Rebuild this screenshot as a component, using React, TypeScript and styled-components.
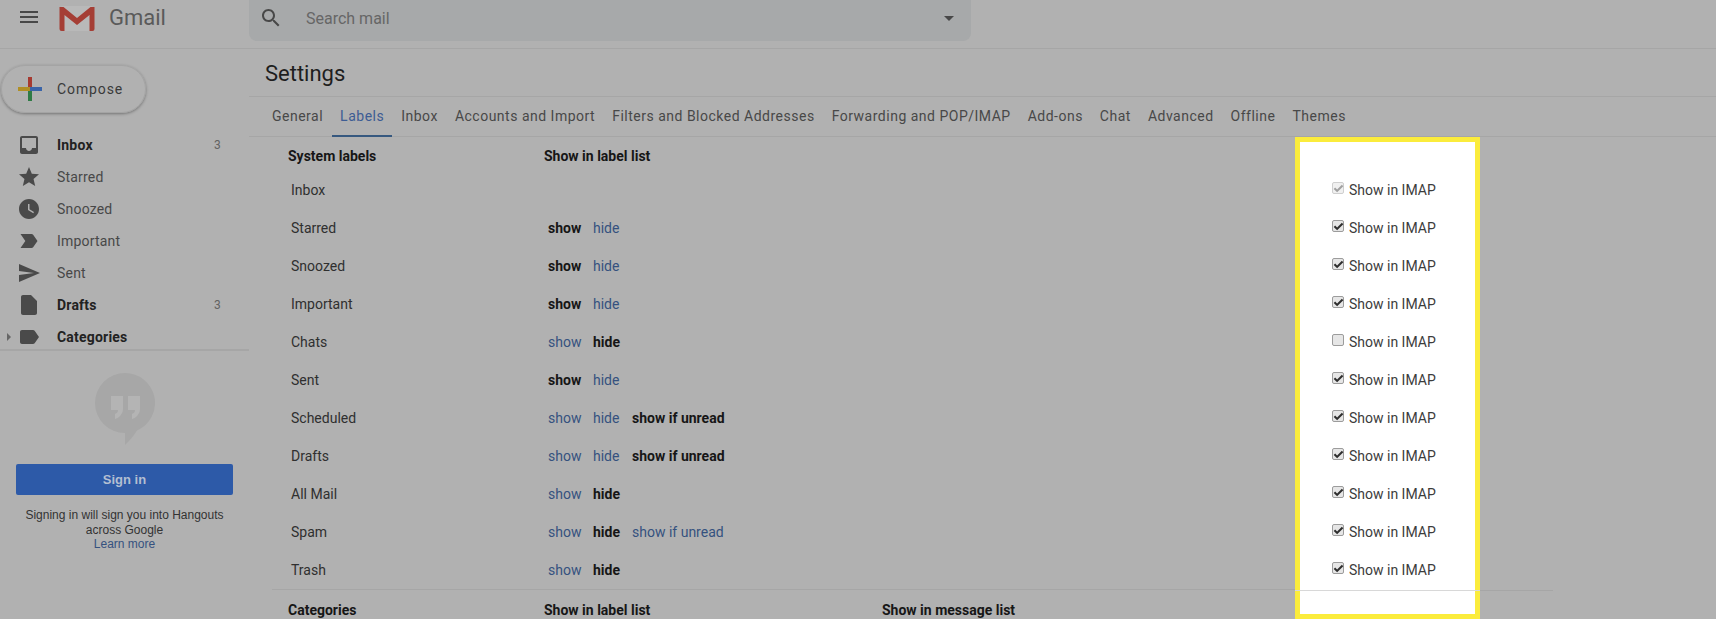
import React, { FC } from 'react';
import styled, { createGlobalStyle } from 'styled-components';

const colors = {
  page: '#b1b1b1',
  line: '#a6a6a6',
  search: '#a7a9aa',
  text: '#2f2f2f',
  strong: '#161616',
  soft: '#484848',
  icon: '#4a4a4a',
  link: '#35517f',
  blue: '#2d5aa8',
  yellow: '#fbec3c',
};

const GlobalStyle = createGlobalStyle`
  html, body {
    margin: 0;
    padding: 0;
    overflow: hidden;
    background: ${colors.page};
  }
  body {
    font-family: Roboto, "Liberation Sans", sans-serif;
    font-size: 14px;
    color: ${colors.text};
  }
`;

const Page = styled.div`
  width: 1716px;
  height: 619px;
  overflow: hidden;
  display: flex;
  flex-direction: column;
`;

const TopBar = styled.header`
  flex: 0 0 49px;
  box-sizing: border-box;
  display: flex;
  border-bottom: 1px solid ${colors.line};
`;

const Brand = styled.div`
  flex: 0 0 249px;
  box-sizing: border-box;
  padding: 4px 0 0 17px;
  display: flex;
  align-items: flex-start;
`;

const MenuIcon = styled.svg`
  width: 24px;
  height: 24px;
  margin-top: 1px;
  fill: ${colors.soft};
`;

const Logo = styled.svg`
  width: 38px;
  height: 27px;
  margin-left: 17px;
`;

const BrandName = styled.span`
  margin-left: 13px;
  font-size: 22px;
  line-height: 27px;
  color: #5a5a5a;
`;

const SearchBox = styled.div`
  flex: 0 0 722px;
  height: 41px;
  box-sizing: border-box;
  padding: 0 17px 5px 10px;
  display: flex;
  align-items: center;
  background: ${colors.search};
  border-radius: 0 0 8px 8px;
`;

const SearchIcon = styled.svg`
  width: 24px;
  height: 24px;
  fill: ${colors.soft};
`;

const SearchText = styled.span`
  margin-left: 23px;
  font-size: 16px;
  color: #666;
  flex: 1;
`;

const Caret = styled.span`
  width: 0;
  height: 0;
  border-left: 5px solid transparent;
  border-right: 5px solid transparent;
  border-top: 5px solid ${colors.soft};
`;

const Body = styled.div`
  flex: 1;
  min-height: 0;
  display: flex;
`;

const Sidebar = styled.aside`
  flex: 0 0 249px;
  display: flex;
  flex-direction: column;
`;

const ComposeButton = styled.div`
  width: 145px;
  height: 48px;
  box-sizing: border-box;
  margin: 16px 0 15px 1px;
  padding-left: 16px;
  display: flex;
  align-items: center;
  gap: 15px;
  border-radius: 24px;
  border: 1px solid #a4a4a4;
  box-shadow: 0 1px 3px rgba(0, 0, 0, 0.35);
  letter-spacing: 0.9px;
  color: #3a3a3a;
`;

const PlusIcon = styled.svg`
  width: 24px;
  height: 24px;
  flex: none;
`;

const NavList = styled.nav`
  height: 223px;
  box-sizing: border-box;
  padding-top: 1px;
  overflow: hidden;
  border-bottom: 2px solid ${colors.line};
`;

const NavRow = styled.div<{ $bold?: boolean }>`
  position: relative;
  flex: none;
  height: 32px;
  box-sizing: border-box;
  padding: 0 28px 0 17px;
  display: flex;
  align-items: center;
  gap: 16px;
  letter-spacing: 0.2px;
  font-weight: ${(p) => (p.$bold ? 700 : 400)};
  color: ${(p) => (p.$bold ? '#222' : colors.soft)};
`;

const NavIcon = styled.svg`
  width: 24px;
  height: 24px;
  flex: none;
  fill: ${colors.icon};
`;

const NavCount = styled.span`
  margin-left: auto;
  font-size: 12px;
  font-weight: 400;
  color: #626262;
`;

const Expander = styled.span`
  position: absolute;
  left: 7px;
  top: 12px;
  border-top: 4px solid transparent;
  border-bottom: 4px solid transparent;
  border-left: 4px solid #666;
`;

const Hangouts = styled.section`
  display: flex;
  flex-direction: column;
  align-items: center;
  padding: 22px 16px 0;
`;

const Bubble = styled.svg`
  width: 60px;
  height: 72px;
  margin-bottom: 19px;
`;

const SignIn = styled.div`
  align-self: stretch;
  width: 217px;
  height: 31px;
  display: flex;
  align-items: center;
  justify-content: center;
  background: ${colors.blue};
  border-radius: 2px;
  font-family: "Liberation Sans", Arial, sans-serif;
  font-size: 13px;
  font-weight: 700;
  color: #b3bfd2;
`;

const SignInNote = styled.p`
  margin: 13px 0 0;
  font-family: "Liberation Sans", Arial, sans-serif;
  font-size: 12px;
  line-height: 14.5px;
  text-align: center;
  color: #333;
`;

const NoteLink = styled.span`
  display: block;
  color: ${colors.link};
`;

const Main = styled.main`
  flex: 1;
  min-width: 0;
`;

const TitleBar = styled.div`
  height: 48px;
  box-sizing: border-box;
  padding: 1px 16px 0;
  display: flex;
  align-items: center;
  border-bottom: 1px solid ${colors.line};
  font-size: 22px;
  color: #1e1e1e;
`;

const Tabs = styled.div`
  height: 40px;
  box-sizing: border-box;
  padding-left: 15px;
  display: flex;
  gap: 1px;
  border-bottom: 1px solid ${colors.line};
`;

const Tab = styled.div<{ $active?: boolean }>`
  box-sizing: border-box;
  height: 40px;
  padding: 0 8px;
  line-height: 38px;
  letter-spacing: 0.5px;
  color: ${(p) => (p.$active ? '#3d5c94' : colors.soft)};
  border-bottom: 2px solid ${(p) => (p.$active ? '#36587f' : 'transparent')};
`;

const TableArea = styled.div`
  display: flex;
`;

const LabelsBlock = styled.div`
  flex: 0 0 1046px;
  box-sizing: border-box;
  padding-left: 23px;
`;

const HeaderRow = styled.div<{ $section?: boolean }>`
  height: ${(p) => (p.$section ? '40px' : '34px')};
  box-sizing: border-box;
  padding: ${(p) => (p.$section ? '1px' : '4px')} 0 0 16px;
  display: grid;
  grid-template-columns: 256px 338px auto;
  align-items: center;
  font-weight: 700;
  color: ${colors.strong};
  border-top: ${(p) => (p.$section ? `1px solid ${colors.line}` : 'none')};
`;

const LabelRow = styled.div`
  height: 38px;
  display: grid;
  grid-template-columns: 257px auto;
  align-items: center;
  padding-left: 19px;
  color: ${colors.text};
`;

const Visibility = styled.div`
  display: grid;
  grid-template-columns: 45px 39px auto;
`;

const Option = styled.span<{ $on?: boolean }>`
  font-weight: ${(p) => (p.$on ? 700 : 400)};
  color: ${(p) => (p.$on ? colors.strong : colors.link)};
`;

const Highlight = styled.div`
  flex: 0 0 185px;
  height: 482px;
  box-sizing: border-box;
  padding-top: 29px;
  background: #fff;
  border: 5px solid ${colors.yellow};
`;

const ImapRow = styled.label`
  height: 38px;
  padding-left: 32px;
  display: flex;
  align-items: center;
  gap: 5px;
  color: #3c3c3c;
`;

const CheckBox = styled.span<{ $disabled?: boolean }>`
  width: 12px;
  height: 12px;
  box-sizing: border-box;
  margin-top: -4px;
  display: flex;
  align-items: center;
  justify-content: center;
  border: 1px solid ${(p) => (p.$disabled ? '#cfcfcf' : '#9c9c9c')};
  border-radius: 2px;
  background: ${(p) => (p.$disabled ? '#f0f0f0' : '#e6e6e6')};
  color: ${(p) => (p.$disabled ? '#a0a0a0' : '#2e2e2e')};
`;

const CheckMark = styled.svg`
  flex: none;
  width: 11px;
  height: 11px;
  fill: currentColor;
`;

const ImapRule = styled.div`
  height: 1px;
  background: #d8d8d8;
  margin: 1px -5px 0;
`;

const TrailingRule = styled.div`
  flex: 0 0 73px;
  height: 453px;
  border-bottom: 1px solid ${colors.line};
`;

const MenuPath = 'M3 18h18v-2H3v2zm0-5h18v-2H3v2zm0-7v2h18V6H3z';
const SearchPath =
  'M15.5 14h-.79l-.28-.27C15.41 12.59 16 11.11 16 9.5 16 5.91 13.09 3 9.5 3S3 5.91 3 9.5 5.91 16 9.5 16c1.61 0 3.09-.59 4.23-1.57l.27.28v.79l5 4.99L20.49 19l-4.99-5zm-6 0C7.01 14 5 11.99 5 9.5S7.01 5 9.5 5 14 7.01 14 9.5 11.99 14 9.5 14z';

const navItems = [
  {
    name: 'Inbox',
    bold: true,
    count: 3,
    path: 'M19 3H5c-1.1 0-2 .9-2 2v14c0 1.1.9 2 2 2h14c1.1 0 2-.9 2-2V5c0-1.1-.9-2-2-2zm0 12h-4c0 1.66-1.35 3-3 3s-3-1.34-3-3H5V5h14v10z',
  },
  { name: 'Starred', path: 'M12 17.27L18.18 21l-1.64-7.03L22 9.24l-7.19-.61L12 2 9.19 8.63 2 9.24l5.46 4.73L5.82 21z' },
  {
    name: 'Snoozed',
    path: 'M12 2C6.47 2 2 6.48 2 12s4.47 10 10 10 10-4.48 10-10S17.52 2 12 2zm4.25 14.15L11 13V7h1.5v5.25l4.5 2.67-.75 1.23z',
  },
  {
    name: 'Important',
    path: 'M3.5 18.99l11 .01c.67 0 1.27-.33 1.63-.84L20.5 12l-4.37-6.16c-.36-.51-.96-.84-1.63-.84l-11 .01L8.34 12 3.5 18.99z',
  },
  { name: 'Sent', path: 'M2.01 21L23 12 2.01 3 2 10l15 2-15 2z' },
  {
    name: 'Drafts',
    bold: true,
    count: 3,
    path: 'M14 2H6c-1.1 0-1.99.9-1.99 2L4 20c0 1.1.89 2 1.99 2H18c1.1 0 2-.9 2-2V8l-6-6z',
  },
  {
    name: 'Categories',
    bold: true,
    expander: true,
    path: 'M17.63 5.84C17.27 5.33 16.67 5 16 5L5 5.01C3.9 5.01 3 5.9 3 7v10c0 1.1.9 1.99 2 1.99L16 19c.67 0 1.27-.33 1.63-.84L22 12l-4.37-6.16z',
  },
];

const tabs = [
  'General',
  'Labels',
  'Inbox',
  'Accounts and Import',
  'Filters and Blocked Addresses',
  'Forwarding and POP/IMAP',
  'Add-ons',
  'Chat',
  'Advanced',
  'Offline',
  'Themes',
];

type Choice = 'show' | 'hide' | 'unread';

const labels: { name: string; choice?: Choice; options?: Choice[]; imap: boolean; locked?: boolean }[] = [
  { name: 'Inbox', imap: true, locked: true },
  { name: 'Starred', choice: 'show', options: ['show', 'hide'], imap: true },
  { name: 'Snoozed', choice: 'show', options: ['show', 'hide'], imap: true },
  { name: 'Important', choice: 'show', options: ['show', 'hide'], imap: true },
  { name: 'Chats', choice: 'hide', options: ['show', 'hide'], imap: false },
  { name: 'Sent', choice: 'show', options: ['show', 'hide'], imap: true },
  { name: 'Scheduled', choice: 'unread', options: ['show', 'hide', 'unread'], imap: true },
  { name: 'Drafts', choice: 'unread', options: ['show', 'hide', 'unread'], imap: true },
  { name: 'All Mail', choice: 'hide', options: ['show', 'hide'], imap: true },
  { name: 'Spam', choice: 'hide', options: ['show', 'hide', 'unread'], imap: true },
  { name: 'Trash', choice: 'hide', options: ['show', 'hide'], imap: true },
];

const optionText: Record<Choice, string> = {
  show: 'show',
  hide: 'hide',
  unread: 'show if unread',
};

const GmailLogo: FC = () => (
  <Logo viewBox="0 0 37 27">
    <rect x="3" y="2" width="31" height="25" fill="#b9b9b9" />
    <path d="M1 3h4l13.500 11L32 3h4v22a2 2 0 0 1-2 2h-3V11L18.500 21 6 11v16H3a2 2 0 0 1-2-2z" fill="#a53e35" />
  </Logo>
);

const ComposePlus: FC = () => (
  <PlusIcon viewBox="0 0 24 24">
    <rect x="10" y="0" width="4" height="12" fill="#a63a30" />
    <rect x="10" y="12" width="4" height="12" fill="#2f7b45" />
    <rect x="0" y="10" width="12" height="4" fill="#b08f25" />
    <rect x="12" y="10" width="12" height="4" fill="#3a64a8" />
  </PlusIcon>
);

const HangoutsBubble: FC = () => (
  <Bubble viewBox="0 0 60 72">
    <path
      d="M30 0a30 30 0 0 1 12 57.500C38 64 34 68 30 72V60A30 30 0 0 1 30 0z"
      fill="#a7a7a7"
    />
    <path
      d="M16 23h12v13c0 5-4 9-8 10v-5c2-1 3-2 3-4h-7zM33 23h12v13c0 5-4 9-8 10v-5c2-1 3-2 3-4h-7z"
      fill="#b4b4b4"
    />
  </Bubble>
);

export default function App() {
  return (
    <Page>
      <GlobalStyle />
      <TopBar>
        <Brand>
          <MenuIcon viewBox="0 0 24 24">
            <path d={MenuPath} />
          </MenuIcon>
          <GmailLogo />
          <BrandName>Gmail</BrandName>
        </Brand>
        <SearchBox>
          <SearchIcon viewBox="0 0 24 24">
            <path d={SearchPath} />
          </SearchIcon>
          <SearchText>Search mail</SearchText>
          <Caret />
        </SearchBox>
      </TopBar>
      <Body>
        <Sidebar>
          <ComposeButton>
            <ComposePlus />
            Compose
          </ComposeButton>
          <NavList>
            {navItems.map((item) => (
              <NavRow key={item.name} $bold={item.bold}>
                {item.expander && <Expander />}
                <NavIcon viewBox="0 0 24 24">
                  <path d={item.path} />
                </NavIcon>
                {item.name}
                {item.count && <NavCount>{item.count}</NavCount>}
              </NavRow>
            ))}
          </NavList>
          <Hangouts>
            <HangoutsBubble />
            <SignIn>Sign in</SignIn>
            <SignInNote>
              Signing in will sign you into Hangouts
              <br />
              across Google
              <NoteLink>Learn more</NoteLink>
            </SignInNote>
          </Hangouts>
        </Sidebar>
        <Main>
          <TitleBar>Settings</TitleBar>
          <Tabs>
            {tabs.map((tab) => (
              <Tab key={tab} $active={tab === 'Labels'}>
                {tab}
              </Tab>
            ))}
          </Tabs>
          <TableArea>
            <LabelsBlock>
              <HeaderRow>
                <span>System labels</span>
                <span>Show in label list</span>
              </HeaderRow>
              {labels.map((label) => (
                <LabelRow key={label.name}>
                  <span>{label.name}</span>
                  <Visibility>
                    {label.options?.map((option) => (
                      <Option key={option} $on={option === label.choice}>
                        {optionText[option]}
                      </Option>
                    ))}
                  </Visibility>
                </LabelRow>
              ))}
              <HeaderRow $section>
                <span>Categories</span>
                <span>Show in label list</span>
                <span>Show in message list</span>
              </HeaderRow>
            </LabelsBlock>
            <Highlight>
              {labels.map((label) => (
                <ImapRow key={label.name}>
                  <CheckBox $disabled={label.locked}>
                    {label.imap && (
                      <CheckMark viewBox="0 0 24 24">
                        <path d="M9 20.400L1.500 12.900l3.200-3.200L9 14l10.300-10.300 3.200 3.200z" />
                      </CheckMark>
                    )}
                  </CheckBox>
                  Show in IMAP
                </ImapRow>
              ))}
              <ImapRule />
            </Highlight>
            <TrailingRule />
          </TableArea>
        </Main>
      </Body>
    </Page>
  );
}
